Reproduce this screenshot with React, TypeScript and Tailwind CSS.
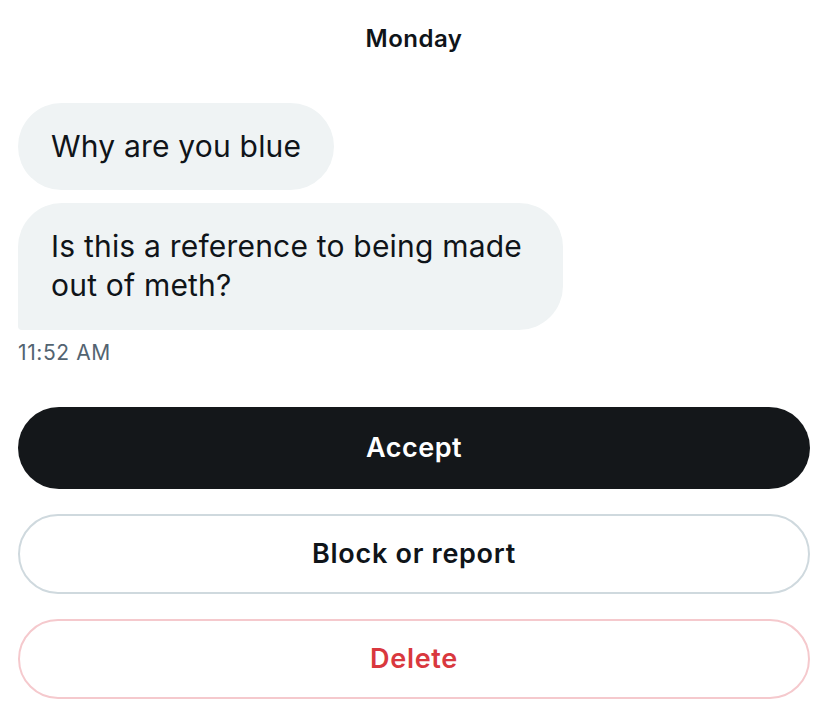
const font = { fontFamily: "Inter, 'Noto Sans', sans-serif" };

const App = () => {
    return (
        <div className="w-[828px] h-[721px] bg-white text-[#0f1419]" style={font}>
            <div className="flex flex-col pt-[24px] px-[18px]">
                <div className="text-center text-[24px] leading-[30px] font-semibold tracking-[0.5px]">Monday</div>

                <div className="flex flex-col items-start gap-[13px] mt-[49px]">
                    <div className="bg-[#eff3f4] rounded-[44px] px-[33px] py-[24px] text-[30px] leading-[39px] tracking-[0.2px]">
                        Why are you blue
                    </div>
                    <div className="bg-[#eff3f4] rounded-[44px] rounded-bl-[4px] pl-[33px] pr-[30px] pt-[24px] pb-[25px] text-[30px] leading-[39px] tracking-[0.2px] w-[545px]">
                        Is this a reference to being made out of meth?
                    </div>
                </div>
                <div className="mt-[10px] text-[21px] leading-[26px] text-[#536471] tracking-[0.6px]">11:52 AM</div>

                <div className="flex flex-col gap-[25px] mt-[41px]">
                    <button className="h-[82px] w-full rounded-full bg-[#14171a] text-white text-[27px] font-semibold tracking-[0.5px]">
                        Accept
                    </button>
                    <button className="h-[80px] w-full rounded-full border-2 border-[#cfd9de] bg-white text-[#0f1419] text-[27px] font-semibold tracking-[0.7px]">
                        Block or report
                    </button>
                    <button className="h-[80px] w-full rounded-full border-2 border-[#f5c9cd] bg-white text-[#d9383e] text-[27px] font-semibold tracking-[0.7px]">
                        Delete
                    </button>
                </div>
            </div>
        </div>
    );
};

export default App;
